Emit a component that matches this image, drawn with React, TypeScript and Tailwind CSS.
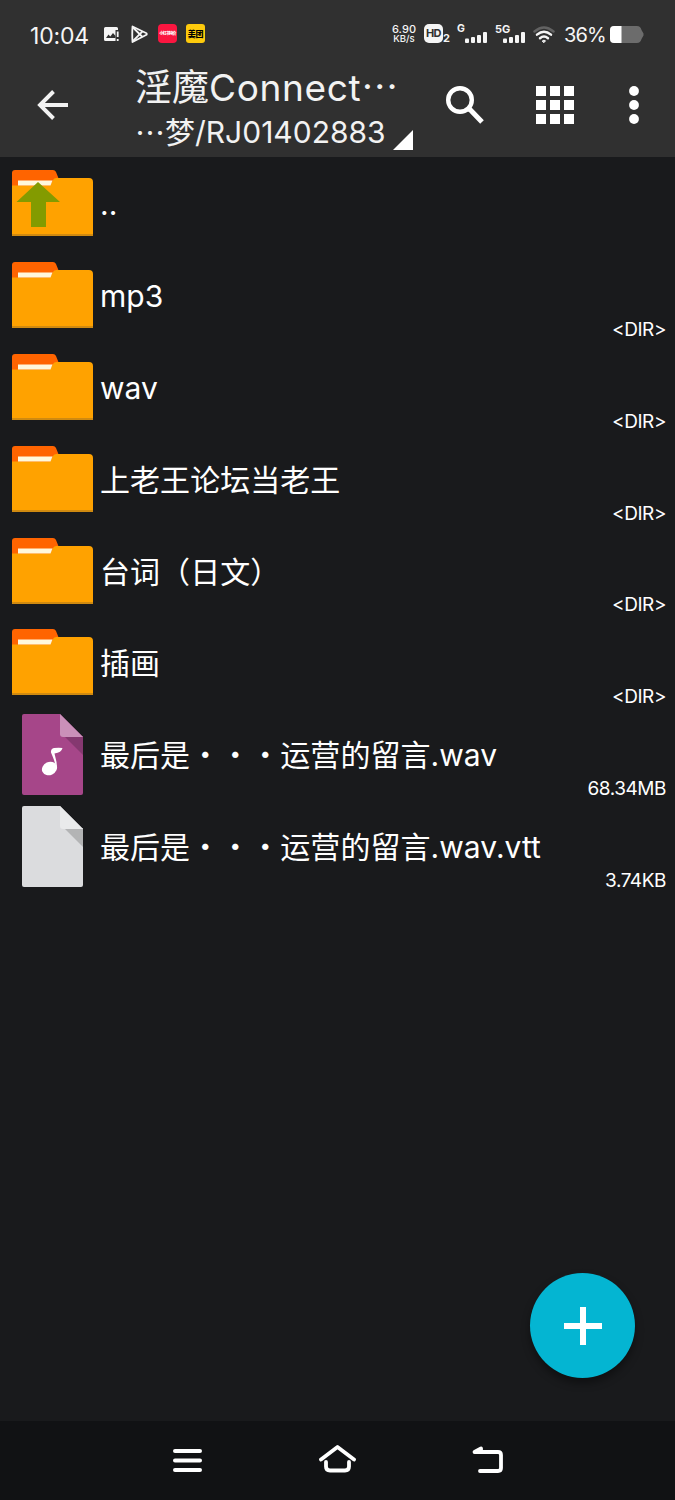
import type { ReactNode } from "react";

// ─── Data ────────────────────────────────────────────────────────────────────

type Entry = {
  kind: "up" | "folder" | "audio" | "file";
  name: ReactNode;
  info?: string;
};

const entries: Entry[] = [
  { kind: "up", name: ".." },
  { kind: "folder", name: "mp3", info: "<DIR>" },
  { kind: "folder", name: "wav", info: "<DIR>" },
  { kind: "folder", name: "上老王论坛当老王", info: "<DIR>" },
  { kind: "folder", name: "台词（日文）", info: "<DIR>" },
  { kind: "folder", name: "插画", info: "<DIR>" },
  { kind: "audio", name: "最后是・・・运营的留言.wav", info: "68.34MB" },
  { kind: "file", name: "最后是・・・运营的留言.wav.vtt", info: "3.74KB" },
];

// ─── Icons ───────────────────────────────────────────────────────────────────

function FolderIcon({ up }: { up?: boolean }) {
  return (
    <svg width="81" height="66" viewBox="0 0 81 66">
      <path d="M0 20V3Q0 0 3 0H41Q43 0 44 2L48 12V20Z" fill="#ff6400" />
      <path
        d="M0 15.5H37.5Q38.5 15.5 39 14L41 10Q42 8 44.500 8H77Q81 8 81 12V66H0Z"
        fill="#ffa200"
      />
      <path d="M6 10.500H40.500L38.500 15.500H6Z" fill="#fff8dc" />
      <path d="M0 64H81V66H0Z" fill="#d08a10" />
      {up && <path d="M26 12L48 32H34V57H19V32H4.500Z" fill="#839b00" />}
    </svg>
  );
}

function FileIcon({ audio }: { audio?: boolean }) {
  return (
    <svg width="61" height="81" viewBox="0 0 61 81">
      <path
        d="M2 0H38L61 23V79Q61 81 59 81H2Q0 81 0 79V2Q0 0 2 0Z"
        fill={audio ? "#a64689" : "#dbdcde"}
      />
      <path d="M42 22L61 41V22Z" fill={audio ? "#853870" : "#b3b4b5"} />
      <path
        d="M38 0L61 23H41Q38 23 38 20Z"
        fill={audio ? "#ca90b9" : "#e9eaeb"}
      />
      {audio && (
        <>
          <ellipse cx="27.500" cy="54.500" rx="7.800" ry="6.500" fill="#fff" transform="rotate(-25 27.500 54.500)" />
          <path
            d="M34.800 55L32 46Q30.500 42 29 38.500Q28.500 35 32 34Q37 33.500 40.500 34Q39.500 38.500 32.500 39.500L34.500 48Q35 52 34.800 55Z"
            fill="#fff"
          />
        </>
      )}
    </svg>
  );
}

function SignalBars() {
  return (
    <svg width="22" height="11" viewBox="0 0 22 11" fill="#f5f5f5">
      <rect x="0" y="6.500" width="4" height="4.500" rx="1" />
      <rect x="6" y="5" width="4" height="6" rx="1" />
      <rect x="12" y="3" width="4" height="8" rx="1" />
      <rect x="18" y="0" width="4" height="11" rx="1" />
    </svg>
  );
}

// ─── Sections ────────────────────────────────────────────────────────────────

function StatusBar() {
  return (
    <div className="flex h-[62px] items-start pl-[30px] pt-[24px] text-[#f5f5f5]">
      <span className="w-[74px] text-[23px] leading-[24px] tracking-[-0.2px]">10:04</span>

      <svg className="mt-[3px]" width="16" height="14" viewBox="0 0 16 14">
        <path
          d="M1.500 0H12.500Q14 0 14 1.500V3H11.500V14H1.500Q0 14 0 12.500V1.500Q0 0 1.500 0Z"
          fill="#f5f5f5"
        />
        <path d="M2 11L4.500 7.500L6.300 9.500L9 6L11.500 9V11Z" fill="#303030" />
        <path d="M12.800 4.500H14.600V10H12.800ZM12.800 12H14.600V14H12.800Z" fill="#f5f5f5" />
      </svg>

      <svg
        className="ml-[11px] mt-px"
        width="17"
        height="19"
        viewBox="0 0 17 19"
        fill="none"
        stroke="#f5f5f5"
        strokeWidth="1.800"
        strokeLinejoin="round"
      >
        <path d="M1.500 1.500L15.500 8.200Q16 9 15.500 9.800L1.500 17Q1 9 1.500 1.500Z" />
        <path d="M2 2.500L11.500 12M2 16L11.500 6.300" />
      </svg>

      <div className="ml-[10px] flex h-[19px] w-[19px] items-center justify-center rounded bg-[#fb1640]">
        <span className="text-[4px] font-black leading-[6px] tracking-[-0.8px] text-white">小红书特价</span>
      </div>
      <div className="ml-[9px] flex h-[19px] w-[19px] items-center justify-center rounded-[3px] bg-[#fdca0c]">
        <span className="text-[8px] font-black leading-[10px] tracking-[-0.3px] text-black">美团</span>
      </div>

      <div className="ml-[187px] flex w-[24px] flex-col items-center text-[10.500px] font-medium leading-[10px]">
        <span className="text-[11px] tracking-[0.1px]">6.90</span>
        <span className="text-[9.500px]">KB/s</span>
      </div>

      <div className="ml-[8px] flex h-[19px] items-end">
        <span className="flex h-[19px] w-[19px] items-center justify-center rounded-[5px] bg-[#f5f5f5] text-[11px] font-bold leading-none tracking-[-0.5px] text-[#303030]">
          HD
        </span>
        <span className="text-[11px] font-bold leading-[9px]">2</span>
      </div>

      <div className="ml-[7px] flex h-[19px]">
        <span className="w-[8px] text-[10.500px] font-bold leading-[10px]">G</span>
        <span className="self-end">
          <SignalBars />
        </span>
      </div>
      <div className="ml-[8px] flex h-[19px]">
        <span className="w-[8px] text-[11px] font-bold leading-[11px]">5G</span>
        <span className="self-end">
          <SignalBars />
        </span>
      </div>

      <svg
        className="ml-[8px] mt-[2px]"
        width="22"
        height="18"
        viewBox="0 0 22 18"
        fill="none"
        strokeWidth="2.500"
        strokeLinecap="round"
      >
        <path d="M1.500 5.500Q11 -2.500 20.500 5.500" stroke="#626262" />
        <path d="M4 8.600Q11 2.800 18 8.600" stroke="#f5f5f5" />
        <path d="M7 12.200Q11 8.800 15 12.200" stroke="#f5f5f5" />
        <path d="M9.500 14.800Q11 13.500 12.500 14.800L11 16.500Z" fill="#f5f5f5" stroke="#f5f5f5" strokeWidth="1" />
      </svg>

      <span className="ml-[9px] w-[46px] whitespace-nowrap text-[20px] leading-[22px] tracking-[-0.9px]">36%</span>

      <svg className="mt-[2px]" width="34" height="17" viewBox="0 0 34 17">
        <path
          d="M4 0H27Q30.500 0 31.500 4L33.500 7.500V9.500L31.500 13Q30.500 17 27 17H4Q0 17 0 13V4Q0 0 4 0Z"
          fill="#6c6c6c"
        />
        <path d="M4 0H11.500V17H4Q0 17 0 13V4Q0 0 4 0Z" fill="#fff" />
      </svg>
    </div>
  );
}

function Toolbar() {
  return (
    <div className="flex h-[95px] items-start text-[#f2f2f2]">
      <svg
        className="ml-[37px] mt-[28px]"
        width="31"
        height="30"
        viewBox="0 0 31 30"
        fill="none"
        stroke="#f2f2f2"
        strokeWidth="3.900"
      >
        <path d="M31 15H3M16.500 1.500L3 15L16.500 28.500" />
      </svg>

      <div className="ml-[67px] flex w-[278px] flex-col whitespace-nowrap">
        <div className="flex h-[48px] text-[37px] leading-[51px]">
          <span>淫魔</span>
          <span className="tracking-[0.65px]">Connect</span>
          <span className="font-['Noto_Sans_CJK_SC'] leading-[47px]">⋯</span>
        </div>
        <div className="flex h-[44px] text-[30px] leading-[44px]">
          <span className="font-['Noto_Sans_CJK_SC'] leading-[42px]">⋯</span>
          <span>梦</span>
          <span>/RJ01402883</span>
          <svg className="ml-[7px] mt-[20px] shrink-0" width="20" height="20" viewBox="0 0 20 20">
            <path d="M20 0V20H0Z" fill="#fff" />
          </svg>
        </div>
      </div>

      <svg className="ml-[33px] mt-[24px]" width="38" height="38" viewBox="0 0 38 38" fill="none" stroke="#fff">
        <circle cx="14" cy="14" r="11.800" strokeWidth="4.400" />
        <path d="M22.500 23L24.500 24L36 36" strokeWidth="5" />
      </svg>

      <svg className="ml-[52px] mt-[24px]" width="38" height="38" viewBox="0 0 38 38" fill="#fff">
        {[0, 14, 28].map((y) =>
          [0, 14, 28].map((x) => <rect key={`${x}-${y}`} x={x} y={y} width="10" height="10" />)
        )}
      </svg>

      <svg className="ml-[55px] mt-[24px]" width="10" height="38" viewBox="0 0 10 38" fill="#fff">
        <circle cx="5" cy="5" r="4.900" />
        <circle cx="5" cy="19" r="4.900" />
        <circle cx="5" cy="33" r="4.900" />
      </svg>
    </div>
  );
}

function Row({ entry }: { entry: Entry }) {
  const isFolder = entry.kind === "folder" || entry.kind === "up";
  return (
    <li className="flex h-[91.900px] items-center pr-[9px] text-white">
      <div className="flex w-[105px] shrink-0 justify-center">
        {isFolder ? <FolderIcon up={entry.kind === "up"} /> : <FileIcon audio={entry.kind === "audio"} />}
      </div>
      <span className="-ml-[5px] flex-1 whitespace-nowrap pt-[2px] text-[30px] leading-[40px] tracking-[0.05px]">
        {entry.name}
      </span>
      <span className="-mb-px self-end text-[19px] leading-[24px] tracking-[-0.45px]">{entry.info}</span>
    </li>
  );
}

function NavBar() {
  return (
    <nav className="flex h-[79px] items-start bg-[#111214]">
      <svg className="ml-[173px] mt-[28px]" width="29" height="24" viewBox="0 0 29 24" stroke="#fff" strokeWidth="4" strokeLinecap="round">
        <path d="M2 2H27M2 11.500H27M2 21H27" />
      </svg>
      <svg
        className="ml-[117px] mt-[23px]"
        width="37"
        height="29"
        viewBox="0 0 37 29"
        fill="none"
        stroke="#fff"
        strokeWidth="3.800"
        strokeLinecap="round"
        strokeLinejoin="round"
      >
        <path d="M2 15.500L18.500 3L35 15.500" />
        <path d="M7 18V22.500Q7 26.500 11 26.500H26Q30 26.500 30 22.500V18" />
      </svg>
      <svg
        className="ml-[116px] mt-[24px]"
        width="31"
        height="28"
        viewBox="0 0 31 28"
        fill="none"
        stroke="#fff"
        strokeWidth="3.800"
        strokeLinecap="round"
        strokeLinejoin="round"
      >
        <path d="M8 26H26Q29 26 29 23V10Q29 7 26 7H2.500L9 3.500V7" />
      </svg>
    </nav>
  );
}

export default function App() {
  return (
    <div className="relative flex h-[1500px] w-[675px] flex-col overflow-hidden bg-[#191a1c] font-['Inter','Noto_Sans_CJK_SC',sans-serif]">
      <header className="h-[157px] shrink-0 bg-[#303030]">
        <StatusBar />
        <Toolbar />
      </header>

      <ul className="flex-1">
        {entries.map((entry, i) => (
          <Row key={i} entry={entry} />
        ))}
      </ul>

      <NavBar />

      {/* Floating add button */}
      <button className="absolute bottom-[122px] right-[40px] flex h-[105px] w-[105px] items-center justify-center rounded-full bg-[#04b5d2] shadow-[0_5px_9px_rgba(0,0,0,0.4)]">
        <svg width="38" height="38" viewBox="0 0 38 38" fill="#fff">
          <path d="M16 0H22V16H38V22H22V38H16V22H0V16H16Z" />
        </svg>
      </button>
    </div>
  );
}
